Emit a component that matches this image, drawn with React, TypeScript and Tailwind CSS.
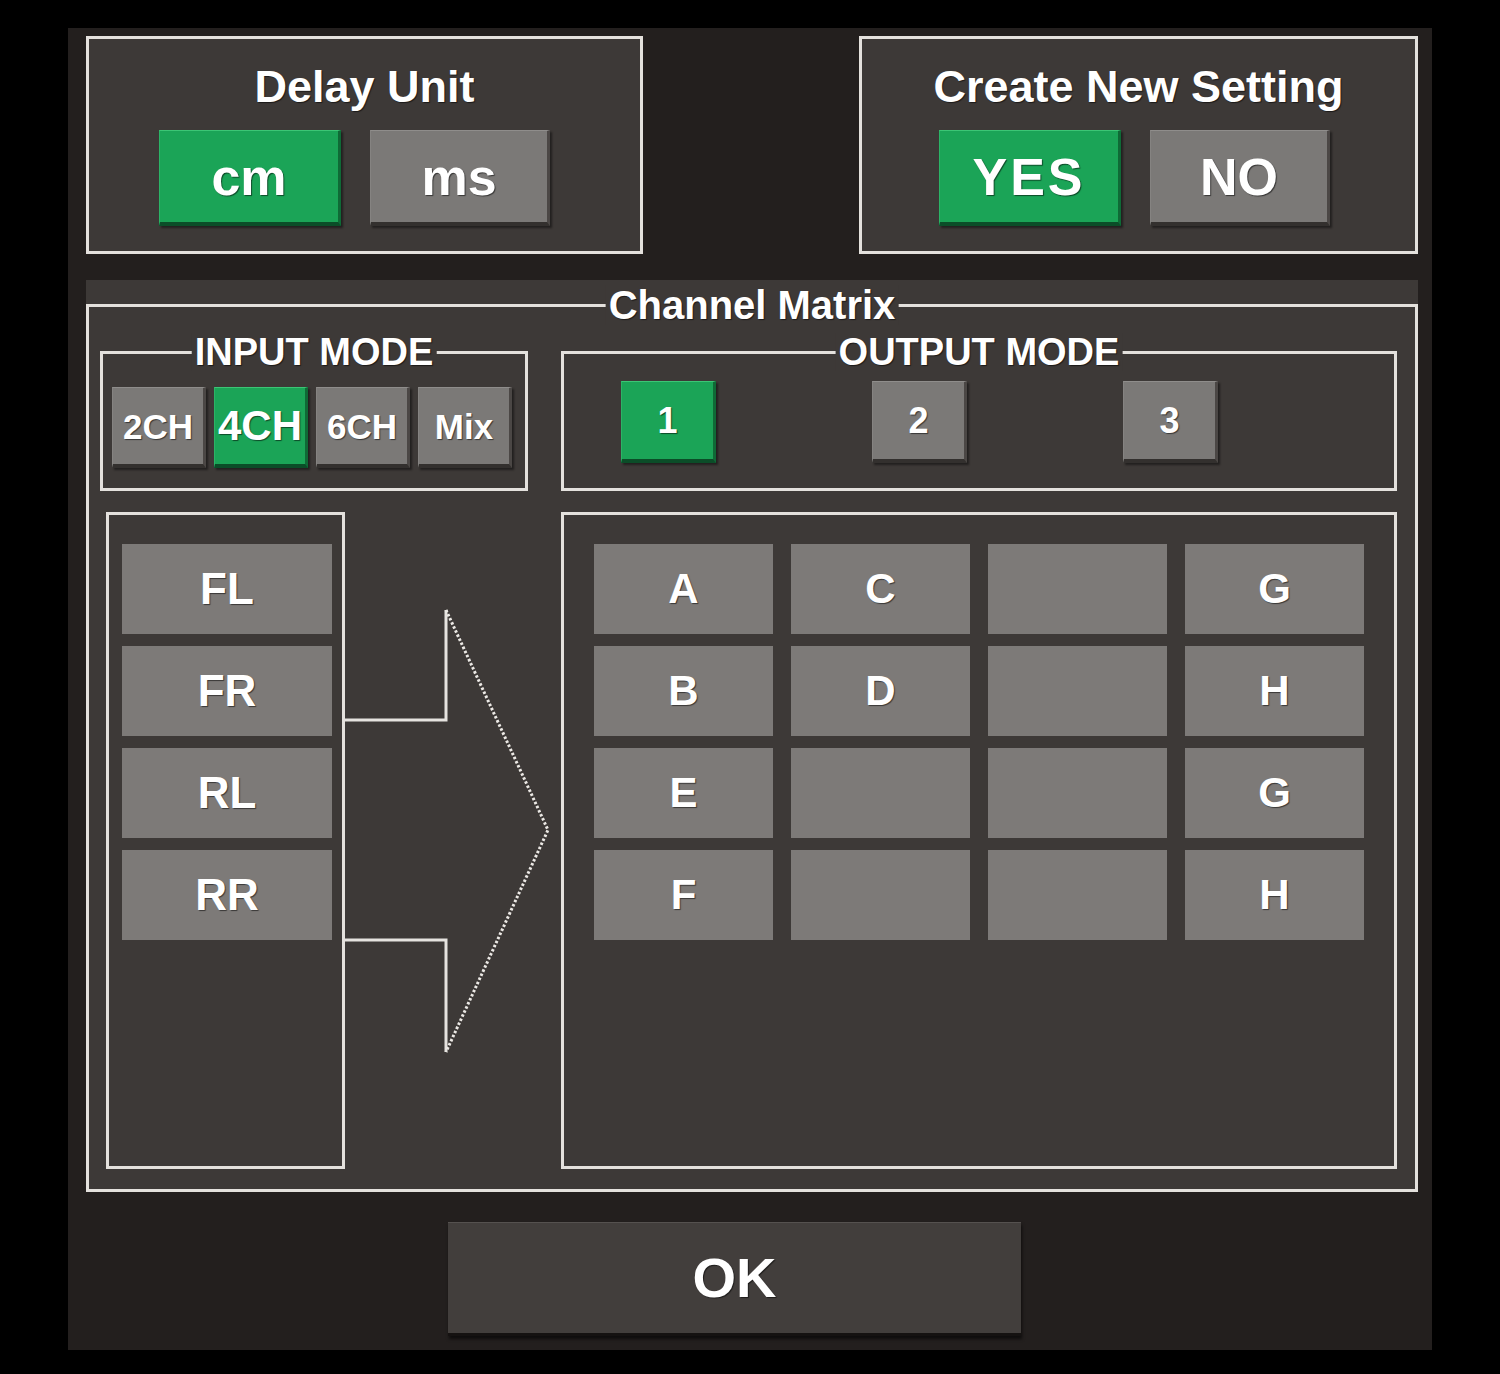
import React from "react";

const line = "border-[3px] border-[#e4e1dd]";
const panelBg = "bg-[#3d3937]";
const txt = "text-white font-bold leading-none [text-shadow:1px_1px_1px_rgba(0,0,0,0.55)]";
const greenBtn =
  "bg-[#1ba457] border-t border-t-[#3cc575] border-l border-l-[#2bb466] border-b-[4px] border-b-[#0b4d28] border-r-[3px] border-r-[#0f6a36] shadow-[2px_2px_2px_rgba(0,0,0,0.45)]";
const grayBtn =
  "bg-[#7b7977] border-t border-t-[#8f8d8b] border-l border-l-[#858381] border-b-[4px] border-b-[#33302e] border-r-[3px] border-r-[#4b4745] shadow-[2px_2px_2px_rgba(0,0,0,0.45)]";

function Btn({ label, on, className }: { label: string; on?: boolean; className: string }) {
  return (
    <div className={`flex items-center justify-center ${on ? greenBtn : grayBtn} ${className}`}>
      <span className={txt}>{label}</span>
    </div>
  );
}

function TopBox({ title, w, pl, items }: { title: string; w: string; pl: string; items: { label: string; on?: boolean; w: string; cls?: string }[] }) {
  return (
    <div className={`${w} h-[218px] ${line} ${panelBg} flex flex-col`}>
      <p className={`${txt} text-[45px] text-center pt-[25px]`}>{title}</p>
      <div className={`flex gap-[29px] mt-[21px] ${pl}`}>
        {items.map((it) => (
          <Btn key={it.label} label={it.label} on={it.on} className={`${it.w} h-[96px] text-[52px] ${it.cls ?? ""}`} />
        ))}
      </div>
    </div>
  );
}

function Legend({ children, top, size }: { children: React.ReactNode; top: string; size: string }) {
  return (
    <span className={`absolute left-1/2 -translate-x-1/2 ${top} ${panelBg} px-[3px] whitespace-nowrap ${txt} ${size}`}>
      {children}
    </span>
  );
}

function Arrow() {
  return (
    <svg width="216" height="657" viewBox="0 0 216 657" className="shrink-0">
      <polyline points="0,208 101,208 101,98" fill="none" stroke="#e6e3df" strokeWidth="3" />
      <polyline points="0,428 101,428 101,540" fill="none" stroke="#e6e3df" strokeWidth="3" />
      <polyline points="101,98 203,318 101,540" fill="none" stroke="#ece9e5" strokeWidth="3" strokeDasharray="2.5 2" />
    </svg>
  );
}

const inputs = ["2CH", "4CH", "6CH", "Mix"];
const channels = ["FL", "FR", "RL", "RR"];
const matrix = ["A", "C", "", "G", "B", "D", "", "H", "E", "", "", "G", "F", "", "", "H"];

export default function App() {
  return (
    <div className="w-full h-[1374px] bg-black pt-[28px] font-['Liberation_Sans',Arial,sans-serif] overflow-hidden">
      <div className="ml-[68px] w-[1364px] h-[1322px] bg-[#231f1e] flex flex-col">
        <div className="flex justify-between pl-[18px] pr-[14px] pt-[8px]">
          <TopBox
            title="Delay Unit"
            w="w-[557px]"
            pl="pl-[70px]"
            items={[
              { label: "cm", on: true, w: "w-[182px]" },
              { label: "ms", w: "w-[180px]" },
            ]}
          />
          <TopBox
            title="Create New Setting"
            w="w-[559px]"
            pl="pl-[77px]"
            items={[
              { label: "YES", on: true, w: "w-[182px]", cls: "tracking-[3px]" },
              { label: "NO", w: "w-[180px]" },
            ]}
          />
        </div>

        <div className={`ml-[18px] mt-[26px] w-[1332px] h-[912px] ${panelBg} pt-[24px]`}>
          <div className={`relative h-[888px] ${line}`}>
            <Legend top="-top-[22px]" size="text-[40px]">Channel Matrix</Legend>

            <div className="flex mt-[44px] ml-[11px]">
              <div className={`relative w-[428px] h-[140px] ${line}`}>
                <Legend top="-top-[21px]" size="text-[38px]">INPUT MODE</Legend>
                <div className="flex gap-[8px] pl-[9px] pt-[33px]">
                  {inputs.map((m) => (
                    <Btn
                      key={m}
                      label={m}
                      on={m === "4CH"}
                      className={`w-[94px] h-[81px] ${m === "4CH" ? "text-[42px]" : "text-[35px]"}`}
                    />
                  ))}
                </div>
              </div>
              <div className={`relative ml-[33px] w-[836px] h-[140px] ${line}`}>
                <Legend top="-top-[21px]" size="text-[38px]">OUTPUT MODE</Legend>
                <div className="flex gap-[156px] pl-[57px] pt-[27px]">
                  {["1", "2", "3"].map((n) => (
                    <Btn key={n} label={n} on={n === "1"} className="w-[95px] h-[82px] text-[36px]" />
                  ))}
                </div>
              </div>
            </div>

            <div className="flex mt-[21px] ml-[17px]">
              <div className={`w-[239px] h-[657px] ${line} flex flex-col gap-[12px] pl-[13px] pt-[29px]`}>
                {channels.map((c) => (
                  <div key={c} className="w-[210px] h-[90px] bg-[#7d7a78] flex items-center justify-center">
                    <span className={`${txt} text-[44px]`}>{c}</span>
                  </div>
                ))}
              </div>
              <Arrow />
              <div className={`w-[836px] h-[657px] ${line} pl-[30px] pt-[29px]`}>
                <div className="grid grid-cols-[repeat(4,179px)] auto-rows-[90px] gap-x-[18px] gap-y-[12px]">
                  {matrix.map((m, i) => (
                    <div key={i} className="bg-[#7d7a78] flex items-center justify-center">
                      <span className={`${txt} text-[42px]`}>{m}</span>
                    </div>
                  ))}
                </div>
              </div>
            </div>
          </div>
        </div>

        <div className="ml-[380px] mt-[30px] w-[573px] h-[114px] bg-[#423e3c] border-t border-t-[#55514f] border-b-[3px] border-b-[#151211] shadow-[1px_3px_3px_rgba(0,0,0,0.6)] flex items-center justify-center">
          <span className={`${txt} text-[56px]`}>OK</span>
        </div>
      </div>
    </div>
  );
}
